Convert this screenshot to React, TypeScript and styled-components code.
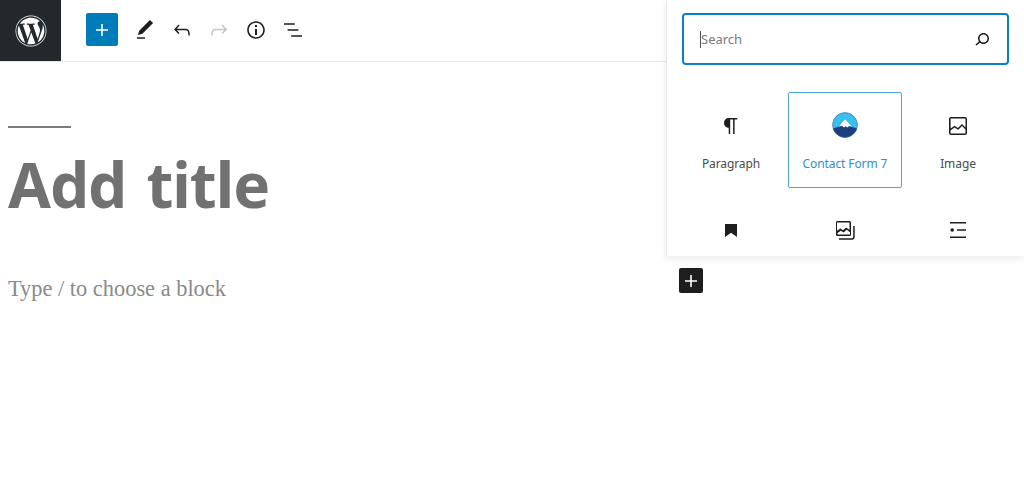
import styled, { createGlobalStyle } from "styled-components";
import { FaWordpress } from "react-icons/fa";

const GlobalStyle = createGlobalStyle`
  html, body {
    margin: 0;
    padding: 0;
    background: #fff;
  }
  body {
    font-family: "Noto Sans", "Open Sans", sans-serif;
    overflow: hidden;
  }
`;

const Page = styled.div`
  position: relative;
  width: 1024px;
  height: 491px;
  overflow: hidden;
  background: #fff;
`;

const Header = styled.header`
  display: flex;
  align-items: center;
  height: 61px;
  border-bottom: 1px solid #e6e6e6;
`;

const LogoBox = styled.div`
  width: 61px;
  height: 61px;
  background: #23282d;
  color: #fff;
  display: flex;
  align-items: center;
  justify-content: center;
  font-size: 32px;
`;

const Toolbar = styled.div`
  display: flex;
  align-items: center;
  margin-left: 25px;
  padding-bottom: 2px;
`;

const InserterButton = styled.div`
  width: 32px;
  height: 33px;
  margin-right: 8px;
  border-radius: 2px;
  background: #007cba;
  color: #fff;
  display: flex;
  align-items: center;
  justify-content: center;
`;

const ToolButton = styled.div<{ $muted?: boolean }>`
  width: 37px;
  height: 36px;
  display: flex;
  align-items: center;
  justify-content: center;
  color: ${(p) => (p.$muted ? "#c4c7c9" : "#1e1e1e")};
`;

const Editor = styled.main`
  padding: 64px 0 0 8px;
`;

const Separator = styled.div`
  width: 63px;
  height: 2px;
  background: #7c7c7c;
`;

const Title = styled.h1`
  margin: 16px 0 0;
  font-family: "Noto Sans", "Open Sans", sans-serif;
  font-size: 62px;
  line-height: 80px;
  font-weight: 700;
  letter-spacing: -1px;
  word-spacing: 5px;
  color: #717171;
`;

const Placeholder = styled.p`
  margin: 50px 0 0;
  font-family: "Liberation Serif", serif;
  font-size: 22.4px;
  line-height: 30px;
  color: #8a8a8a;
`;

const Popover = styled.aside`
  position: absolute;
  top: 0;
  left: 666px;
  width: 358px;
  height: 256px;
  box-sizing: border-box;
  overflow: hidden;
  background: #fff;
  border-left: 1px solid #e8e8e8;
  box-shadow: 0 3px 8px rgba(0, 0, 0, 0.08);
  padding: 13px 15px 0 15px;
`;

const SearchBox = styled.div`
  display: flex;
  align-items: center;
  justify-content: space-between;
  height: 52px;
  box-sizing: border-box;
  border: 2px solid #0a80bf;
  border-radius: 4px;
  padding: 0 13px 0 16px;
  color: #1e1e1e;
`;

const SearchText = styled.span`
  font-size: 13px;
  color: #7a7a7a;
  border-left: 1px solid #555;
  line-height: 17px;
`;

const BlockGrid = styled.div`
  display: grid;
  grid-template-columns: 114px 114px 112px;
  margin: 27px 0 0 -8px;
`;

const BlockTile = styled.div<{ $active?: boolean }>`
  height: 96px;
  box-sizing: border-box;
  display: flex;
  flex-direction: column;
  align-items: center;
  padding-top: 21px;
  gap: 17px;
  border: 1px solid ${(p) => (p.$active ? "#4ba8d4" : "transparent")};
  border-radius: 2px;
  color: ${(p) => (p.$active ? "#2a93c9" : "#4a4a4a")};
`;

const BlockIcon = styled.div`
  width: 24px;
  height: 24px;
  color: #1e1e1e;
  display: flex;
`;

const LogoMark = styled.svg`
  margin: -2px 0 0 -1px;
  flex: none;
`;

const BlockLabel = styled.span`
  font-size: 12px;
  line-height: 17px;
  letter-spacing: -0.1px;
`;

const BlockRow = styled.div`
  display: grid;
  grid-template-columns: 114px 114px 112px;
  justify-items: center;
  margin: 30px 0 0 -8px;
  color: #1e1e1e;
`;

const FloatingAdd = styled.div`
  position: absolute;
  left: 679px;
  top: 268px;
  width: 24px;
  height: 25px;
  border-radius: 2px;
  background: #1e1e1e;
  color: #fff;
  display: flex;
  align-items: center;
  justify-content: center;
`;

const Icon = ({ d, size = 24 }: { d: string; size?: number }) => (
  <svg width={size} height={size} viewBox="0 0 24 24" fill="currentColor">
    <path d={d} />
  </svg>
);

const PLUS = "M18 11.2h-5.2V6h-1.6v5.2H6v1.6h5.2V18h1.6v-5.2H18z";
const PENCIL = "M20.1 5.1L16.9 2 6.2 12.7l-1.3 4.4 4.5-1.3L20.1 5.1zM4 20.8h8v-1.5H4v1.5z";
const UNDO =
  "M18.3 11.7c-.6-.6-1.4-.9-2.3-.9H6.7l2.9-3.3-1.1-1-4.5 5L8.5 16l1-1-2.7-2.7H16c.5 0 .9.2 1.3.5 1 1 1 3.4 1 4.5v.3h1.5v-.2c0-1.5 0-4.3-1.5-5.7z";
const REDO =
  "M15.6 6.5l-1.1 1 2.9 3.3H8c-.9 0-1.7.3-2.3.9-1.4 1.5-1.4 4.2-1.4 5.6v.2h1.5v-.3c0-1.1 0-3.5 1-4.5.3-.3.7-.5 1.3-.5h9.2L14.5 15l1.1 1.1 4.6-4.6-4.6-5z";
const INFO =
  "M12 3.2c-4.8 0-8.8 3.9-8.8 8.8 0 4.8 3.9 8.8 8.8 8.8 4.8 0 8.8-3.9 8.8-8.8 0-4.8-4-8.8-8.8-8.8zm0 16c-4 0-7.2-3.3-7.2-7.2C4.8 8 8 4.8 12 4.8s7.2 3.3 7.2 7.2c0 4-3.2 7.2-7.2 7.2zM11 17h2v-6h-2v6zm0-8h2V7h-2v2z";
const LIST = "M13.8 5.2H3v1.5h10.8V5.2zm-3.6 12v1.5H21v-1.5H10.2zm7.2-6H6.6v1.5h10.8v-1.5z";
const SEARCH =
  "M13.5 6C10.5 6 8 8.5 8 11.5c0 1.1.3 2.1.9 3l-3.4 3 1 1.1 3.4-2.9c1 .9 2.2 1.4 3.6 1.4 3 0 5.5-2.5 5.5-5.5C19 8.5 16.5 6 13.5 6zm0 9.5c-2.2 0-4-1.8-4-4s1.8-4 4-4 4 1.8 4 4-1.8 4-4 4z";
const PARAGRAPH =
  "M18.3 4H9.9v-.1l-.9.2c-2.3.4-4 2.4-4 4.8s1.7 4.4 4 4.8l.7.1V20h1.5V5.5h2.9V20h1.5V5.5h2.7V4z";
const IMAGE =
  "M19 3H5c-1.1 0-2 .9-2 2v14c0 1.1.9 2 2 2h14c1.1 0 2-.9 2-2V5c0-1.1-.9-2-2-2zM5 4.5h14c.3 0 .5.2.5.5v8.4l-3-2.9c-.3-.3-.8-.3-1 0L11.9 14 9 12c-.3-.2-.6-.2-.8 0l-3.6 2.6V5c-.1-.3.1-.5.4-.5zm14 15H5c-.3 0-.5-.2-.5-.5v-2.4l4.1-3 3 1.9c.3.2.7.2.9-.1L16 12l3.5 3.4V19c0 .3-.2.5-.5.5z";
const BOOKMARK = "M6 6h12v13l-6-4.2L6 19z";
const GALLERY =
  "M20.2 8v11c0 .7-.6 1.2-1.2 1.2H6v1.5h13c1.5 0 2.7-1.2 2.7-2.7V8h-1.5zM18 16.4V4.6c0-.9-.7-1.6-1.6-1.6H4.6C3.7 3 3 3.7 3 4.6v11.8c0 .9.7 1.6 1.6 1.6h11.8c.9 0 1.6-.7 1.6-1.6zM4.5 4.6c0-.1 0-.1.1-.1h11.8c.1 0 .1 0 .1.1V12l-2.9-2.2c-.2-.2-.5-.2-.7 0l-2.9 2.5-2.3-1.6c-.2-.2-.5-.2-.7 0l-3 2V4.6zm12 11.8c0 .1 0 .1-.1.1H4.6c-.1 0-.1 0-.1-.1v-1.5l3.3-2.2 2.4 1.6c.2.2.5.2.7 0l2.8-2.5 3.3 2.5v2.1z";
const DETAILS =
  "M4 4h16v1.5H4zM4 18.500h16V20H4zM11 11.2h9v1.500h-9zM6.200 10.200a1.800 1.800 0 1 1 0 3.600 1.800 1.800 0 0 1 0-3.600z";

const CfLogo = () => (
  <LogoMark width="26" height="26" viewBox="0 0 26 26">
    <defs>
      <clipPath id="cf-clip">
        <circle cx="13" cy="13" r="12.4" />
      </clipPath>
    </defs>
    <g clipPath="url(#cf-clip)">
      <rect width="26" height="26" fill="#38c0ee" />
      <path d="M0 26V16.500L6 15 13 7 20 15 26 16.500V26z" fill="#1c3f7f" />
      <path d="M13 7L6.500 14.800l3.500-1 2 1.600 1.500-1.200 2 1.400 1.500-1.500 3 .7z" fill="#fff" />
    </g>
    <circle cx="13" cy="13" r="12.4" fill="none" stroke="#3b5f8f" strokeWidth="0.6" />
  </LogoMark>
);

export default function App() {
  return (
    <Page>
      <GlobalStyle />
      <Header>
        <LogoBox>
          <FaWordpress />
        </LogoBox>
        <Toolbar>
          <InserterButton>
            <Icon d={PLUS} />
          </InserterButton>
          <ToolButton>
            <Icon d={PENCIL} />
          </ToolButton>
          <ToolButton>
            <Icon d={UNDO} />
          </ToolButton>
          <ToolButton $muted>
            <Icon d={REDO} />
          </ToolButton>
          <ToolButton>
            <Icon d={INFO} />
          </ToolButton>
          <ToolButton>
            <Icon d={LIST} />
          </ToolButton>
        </Toolbar>
      </Header>
      <Editor>
        <Separator />
        <Title>Add title</Title>
        <Placeholder>Type / to choose a block</Placeholder>
      </Editor>
      <Popover>
        <SearchBox>
          <SearchText>Search</SearchText>
          <Icon d={SEARCH} />
        </SearchBox>
        <BlockGrid>
          <BlockTile>
            <BlockIcon>
              <Icon d={PARAGRAPH} />
            </BlockIcon>
            <BlockLabel>Paragraph</BlockLabel>
          </BlockTile>
          <BlockTile $active>
            <BlockIcon>
              <CfLogo />
            </BlockIcon>
            <BlockLabel>Contact Form 7</BlockLabel>
          </BlockTile>
          <BlockTile>
            <BlockIcon>
              <Icon d={IMAGE} />
            </BlockIcon>
            <BlockLabel>Image</BlockLabel>
          </BlockTile>
        </BlockGrid>
        <BlockRow>
          <Icon d={BOOKMARK} />
          <Icon d={GALLERY} />
          <Icon d={DETAILS} />
        </BlockRow>
      </Popover>
      <FloatingAdd>
        <Icon d={PLUS} />
      </FloatingAdd>
    </Page>
  );
}
